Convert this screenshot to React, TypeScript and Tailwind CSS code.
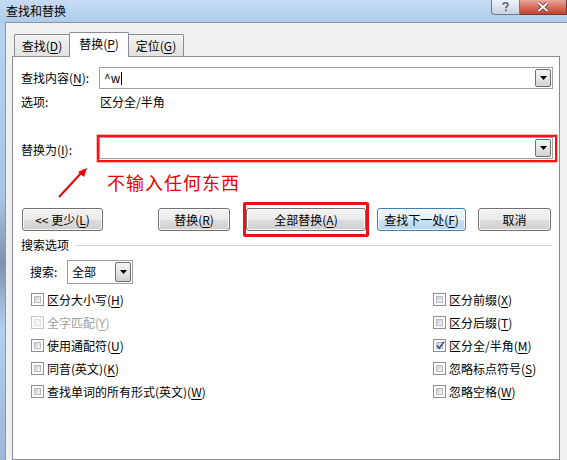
import React from "react";

function Key({ k }: { k: string }) {
  return <span className="underline underline-offset-[2px]">{k}</span>;
}

function DropArrow() {
  return (
    <div className="w-[16px] h-full border border-[#707070] rounded-[2px] bg-[linear-gradient(180deg,#f4f4f4_0%,#e6e6e6_50%,#d2d2d2_100%)] flex items-center justify-center">
      <svg width="7" height="4" viewBox="0 0 7 4">
        <path d="M0 0H7L3.5 4Z" fill="#000" />
      </svg>
    </div>
  );
}

function Combo({ value, cursor }: { value?: string; cursor?: boolean }) {
  return (
    <div className="flex-1 h-[22px] border border-[#a0a0a0] bg-white flex items-center p-px">
      <span className="flex-1 pl-[3px] leading-none flex items-center">
        {value}
        {cursor && <span className="inline-block w-px h-[13px] bg-black ml-px" />}
      </span>
      <DropArrow />
    </div>
  );
}

function Btn({
  children,
  w,
  primary,
}: {
  children: React.ReactNode;
  w: string;
  primary?: boolean;
}) {
  return (
    <div
      className={
        "h-[23px] rounded-[3px] border flex items-center justify-center leading-none shadow-[inset_0_0_0_1px_rgba(255,255,255,0.8)] " +
        w +
        (primary
          ? " border-[#3c7fb1] bg-[linear-gradient(180deg,#f0f7fc_0%,#e3f0fa_50%,#c9e2f5_51%,#b5d7f1_100%)]"
          : " border-[#707070] bg-[linear-gradient(180deg,#f2f2f2_0%,#ebebeb_50%,#dddddd_51%,#cfcfcf_100%)]")
      }
    >
      {children}
    </div>
  );
}

function Check({
  label,
  checked,
  disabled,
}: {
  label: React.ReactNode;
  checked?: boolean;
  disabled?: boolean;
}) {
  return (
    <div className={"h-[23px] flex items-center gap-[3px] " + (disabled ? "text-[#a0a0a0]" : "")}>
      <div
        className={
          "w-[13px] h-[13px] border bg-white p-[2px] relative " +
          (disabled ? "border-[#c4c4c4]" : "border-[#8e8f8f]")
        }
      >
        <div
          className={
            "w-full h-full border " +
            (disabled
              ? "border-[#e0e0e0] bg-[#f4f4f4]"
              : "border-[#b8bcc2] bg-[linear-gradient(135deg,#cbcfd5,#f6f6f6)]")
          }
        />
        {checked && (
          <svg className="absolute left-[1px] top-[0px]" width="11" height="11" viewBox="0 0 11 11">
            <path d="M2 5.5L4.3 8.3L9 1.8" stroke="#3c4d8a" strokeWidth="1.6" fill="none" />
          </svg>
        )}
      </div>
      <span className="leading-none">{label}</span>
    </div>
  );
}

export default function App() {
  return (
    <div className="w-[567px] h-[460px] overflow-hidden flex flex-col font-['Noto_Sans_CJK_SC',sans-serif] text-[12px] text-black bg-[#f0f0f0]">
      {/* title bar */}
      <div className="h-[22px] flex justify-between bg-[linear-gradient(180deg,#c6dbf2_0%,#b9d3ef_60%,#aecbec_100%)]">
        <span className="pl-[6px] pt-[3px] leading-[16px]">查找和替换</span>
        <div className="flex items-start">
          <div className="w-[29px] h-[15px] rounded-bl-[4px] border border-t-0 border-[#6d7b8c] bg-[linear-gradient(180deg,#eef3f9,#c8d4e2)] flex items-center justify-center">
            <svg width="7" height="10" viewBox="0 0 7 10">
              <path d="M1 2.8C1 1.5 2 .8 3.5 .8S6 1.6 6 2.8C6 4.3 3.8 4.4 3.8 6.2" stroke="#4a5565" strokeWidth="1.4" fill="none" />
              <rect x="3" y="7.6" width="1.6" height="1.6" fill="#4a5565" />
            </svg>
          </div>
          <div className="w-[47px] h-[15px] border border-t-0 border-l-0 border-[#6d3a36] bg-[linear-gradient(180deg,#e9a99c_0%,#d6705f_50%,#c2432f_100%)] flex items-center justify-center">
            <svg width="12" height="10" viewBox="0 0 12 10">
              <path d="M1.5 1L10.5 9M10.5 1L1.5 9" stroke="#5a2a26" strokeWidth="3.4" />
              <path d="M1.5 1L10.5 9M10.5 1L1.5 9" stroke="#fff" strokeWidth="2" />
            </svg>
          </div>
        </div>
      </div>

      <div className="flex flex-1 min-h-0">
        <div className="w-[5px] bg-[linear-gradient(180deg,#b6d3f2_0%,#a9c5e4_40%,#7d93ad_55%,#b3d0f0_70%,#9db8d6_100%)]" />
        <div className="flex-1 flex flex-col border-l border-t border-[#8996a6] pt-[9px] pl-[6px] pr-[7px]">
          {/* tabs */}
          <div className="flex items-end h-[25px] pl-[2px] -mb-px relative z-10">
            <div className="w-[55px] h-[22px] mb-px border border-r-0 border-b-0 border-[#898c95] rounded-tl-[2px] bg-[linear-gradient(180deg,#f3f3f3,#e2e2e2)] flex items-center justify-center leading-none">
              查找(<Key k="D" />)
            </div>
            <div className="w-[60px] h-[25px] border border-b-0 border-[#898c95] rounded-t-[2px] bg-white flex items-center justify-center leading-none pb-[2px]">
              替换(<Key k="P" />)
            </div>
            <div className="w-[55px] h-[22px] mb-px border border-l-0 border-b-0 border-[#898c95] rounded-tr-[2px] bg-[linear-gradient(180deg,#f3f3f3,#e2e2e2)] flex items-center justify-center leading-none">
              定位(<Key k="G" />)
            </div>
          </div>

          {/* tab page */}
          <div className="flex-1 border border-[#898c95] bg-white pl-[8px] pr-[6px] flex flex-col">
            <div className="flex items-center mt-[10px]">
              <span className="w-[78px] leading-none">
                查找内容(<Key k="N" />):
              </span>
              <Combo value="^w" cursor />
            </div>
            <div className="flex items-center h-[16px] mt-[5px]">
              <span className="w-[79px] leading-none">选项:</span>
              <span className="leading-none">区分全/半角</span>
            </div>

            <div className="flex items-center mt-[27px]">
              <span className="w-[78px] leading-none pt-[3px]">
                替换为(<Key k="I" />):
              </span>
              <div className="flex-1 flex relative">
                <Combo />
                <div className="absolute -left-[2px] -top-[2px] -right-[4px] -bottom-[3px] border-2 border-[#ff1010] shadow-[0_0_0_1px_rgba(255,140,140,0.6)]" />
              </div>
            </div>

            {/* note under the replace box */}
            <div className="h-[49px] relative pt-[11px] pl-[86px]">
              <span className="text-[18px] leading-[24px] text-[#e80000] tracking-[1px]">不输入任何东西</span>
              <svg className="absolute left-[36px] top-[8px]" width="32" height="32" viewBox="0 0 32 32">
                <path d="M2 30L27 3" stroke="#e80000" strokeWidth="2" />
                <path d="M30 1L21 5L27 10Z" fill="#e80000" />
              </svg>
            </div>

            <div className="flex items-center">
              <div className="ml-[1px]">
                <Btn w="w-[81px]">
                  &lt;&lt; 更少(<Key k="L" />)
                </Btn>
              </div>
              <div className="ml-[55px]">
                <Btn w="w-[72px]">
                  替换(<Key k="R" />)
                </Btn>
              </div>
              <div className="ml-[16px] relative">
                <Btn w="w-[120px]">
                  全部替换(<Key k="A" />)
                </Btn>
                <div className="absolute -left-[3px] -right-[3px] -top-[6px] -bottom-[6px] border-[3px] border-[#f01010] rounded-[2px]" />
              </div>
              <div className="ml-[11px]">
                <Btn w="w-[89px]" primary>
                  查找下一处(<Key k="F" />)
                </Btn>
              </div>
              <div className="ml-[12px]">
                <Btn w="w-[73px]">取消</Btn>
              </div>
            </div>

            <div className="flex items-center h-[16px] mt-[6px] gap-[6px]">
              <span className="leading-none">搜索选项</span>
              <div className="flex-1 h-px bg-[#d5d9de] mr-[1px]" />
            </div>

            <div className="flex items-center mt-[7px] pl-[9px]">
              <span className="w-[37px] leading-none">搜索:</span>
              <div className="w-[66px] h-[24px] border border-[#a0a0a0] bg-white flex items-center p-px">
                <span className="flex-1 pl-[3px] leading-none">全部</span>
                <DropArrow />
              </div>
            </div>

            <div className="flex mt-[4px] pl-[10px]">
              <div className="flex-1 flex flex-col">
                <Check label={<>区分大小写(<Key k="H" />)</>} />
                <Check label={<>全字匹配(<Key k="Y" />)</>} disabled />
                <Check label={<>使用通配符(<Key k="U" />)</>} />
                <Check label={<>同音(英文)(<Key k="K" />)</>} />
                <Check label={<>查找单词的所有形式(英文)(<Key k="W" />)</>} />
              </div>
              <div className="w-[120px] flex flex-col">
                <Check label={<>区分前缀(<Key k="X" />)</>} />
                <Check label={<>区分后缀(<Key k="T" />)</>} />
                <Check label={<>区分全/半角(<Key k="M" />)</>} checked />
                <Check label={<>忽略标点符号(<Key k="S" />)</>} />
                <Check label={<>忽略空格(<Key k="W" />)</>} />
              </div>
            </div>
          </div>
        </div>
      </div>
    </div>
  );
}
